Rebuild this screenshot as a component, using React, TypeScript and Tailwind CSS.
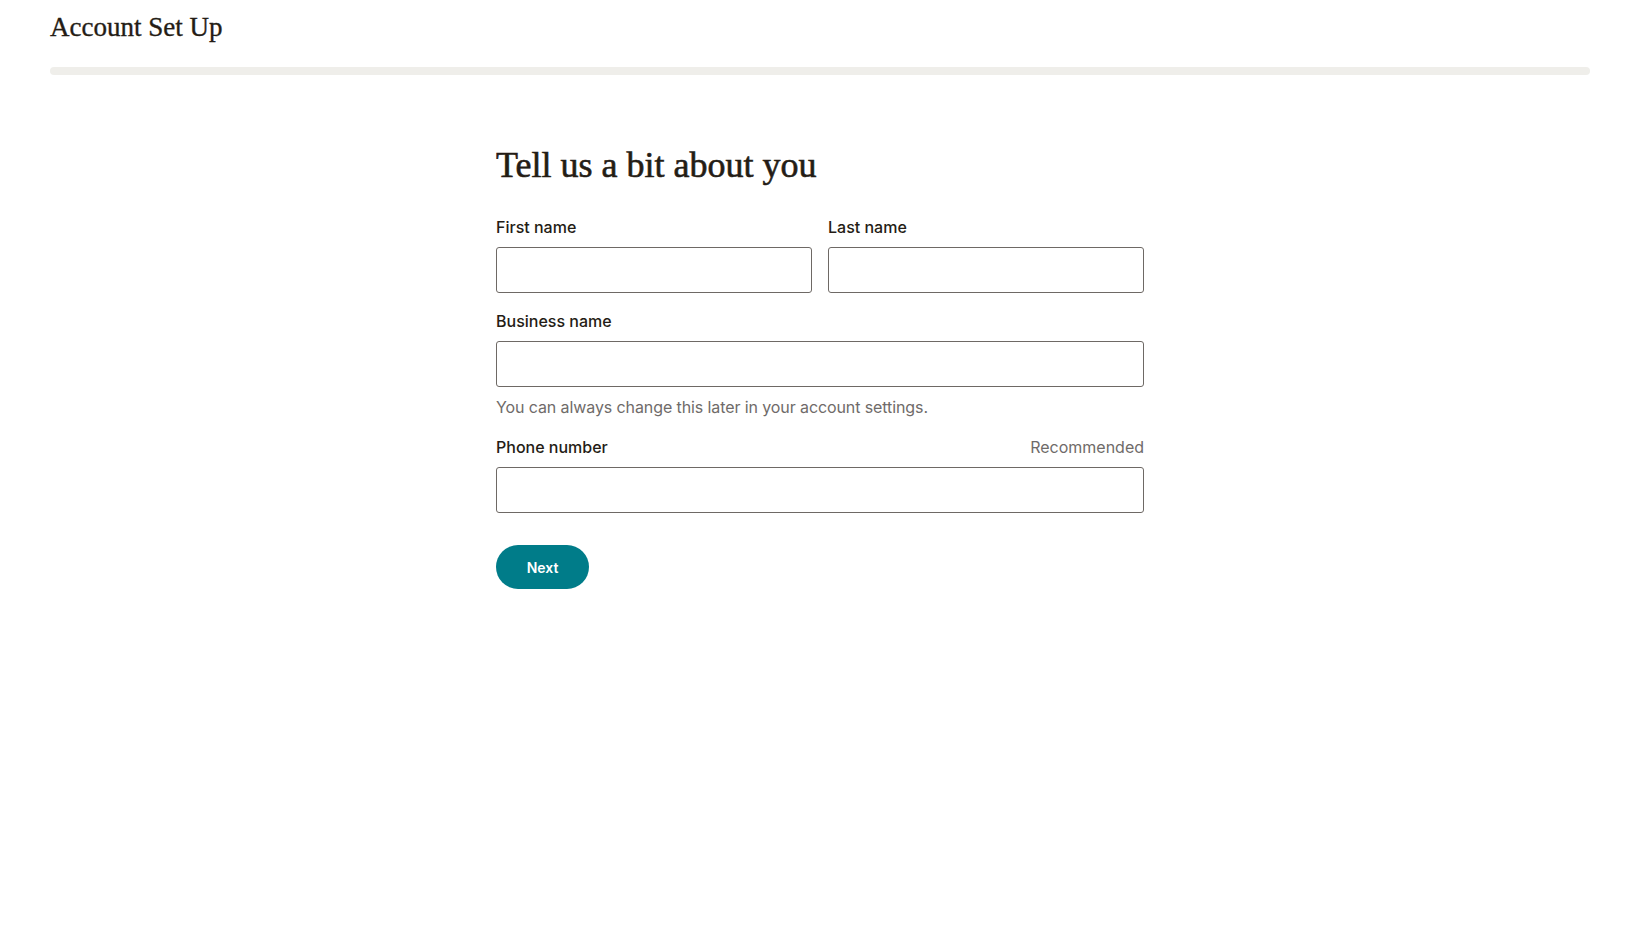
export default function App() {
  const sans = { fontFamily: 'Inter, "Liberation Sans", sans-serif' };
  const serif = { fontFamily: '"Liberation Serif", serif' };

  const inputCls =
    "block w-full h-[46px] rounded-[3px] border border-[#6e6965] bg-white px-3 text-[16px] text-[#241c15] outline-none";
  const labelCls = "block text-[16px] leading-[20px] font-medium";

  return (
    <div className="min-h-screen bg-white text-[#241c15]" style={sans}>
      <header className="pt-[11px] pl-[50px] pr-[41px]">
        <h1
          className="text-[27px] leading-[32px] text-[#241c15] [-webkit-text-stroke:0.35px_#241c15]"
          style={serif}
        >
          Account Set Up
        </h1>
        <div className="mt-[24px] h-[8px] w-full rounded-full bg-[#efeeea]" />
      </header>

      <main className="ml-[496px] mt-[70px] w-[648px]">
        <h2
          className="text-[36px] leading-[40px] text-[#241c15] [-webkit-text-stroke:0.6px_#241c15]"
          style={serif}
        >
          Tell us a bit about you
        </h2>

        <div className="mt-[32px] grid grid-cols-2 gap-4">
          <div>
            <label className={labelCls}>First name</label>
            <input className={`${inputCls} mt-[10px]`} />
          </div>
          <div>
            <label className={labelCls}>Last name</label>
            <input className={`${inputCls} mt-[10px]`} />
          </div>
        </div>

        <div className="mt-[18px]">
          <label className={labelCls}>Business name</label>
          <input className={`${inputCls} mt-[10px]`} />
          <p className="mt-[8px] text-[16px] leading-[24px] tracking-[-0.1px] text-[#6f6b69]">
            You can always change this later in your account settings.
          </p>
        </div>

        <div className="mt-[18px]">
          <div className="flex items-center justify-between">
            <label className={labelCls}>Phone number</label>
            <span className="text-[16px] leading-[20px] text-[#6f6b69]">Recommended</span>
          </div>
          <input className={`${inputCls} mt-[10px]`} />
        </div>

        <button className="mt-[32px] h-[44px] w-[93px] rounded-full bg-[#007c89] text-[14px] font-semibold text-white">
          Next
        </button>
      </main>
    </div>
  );
}
